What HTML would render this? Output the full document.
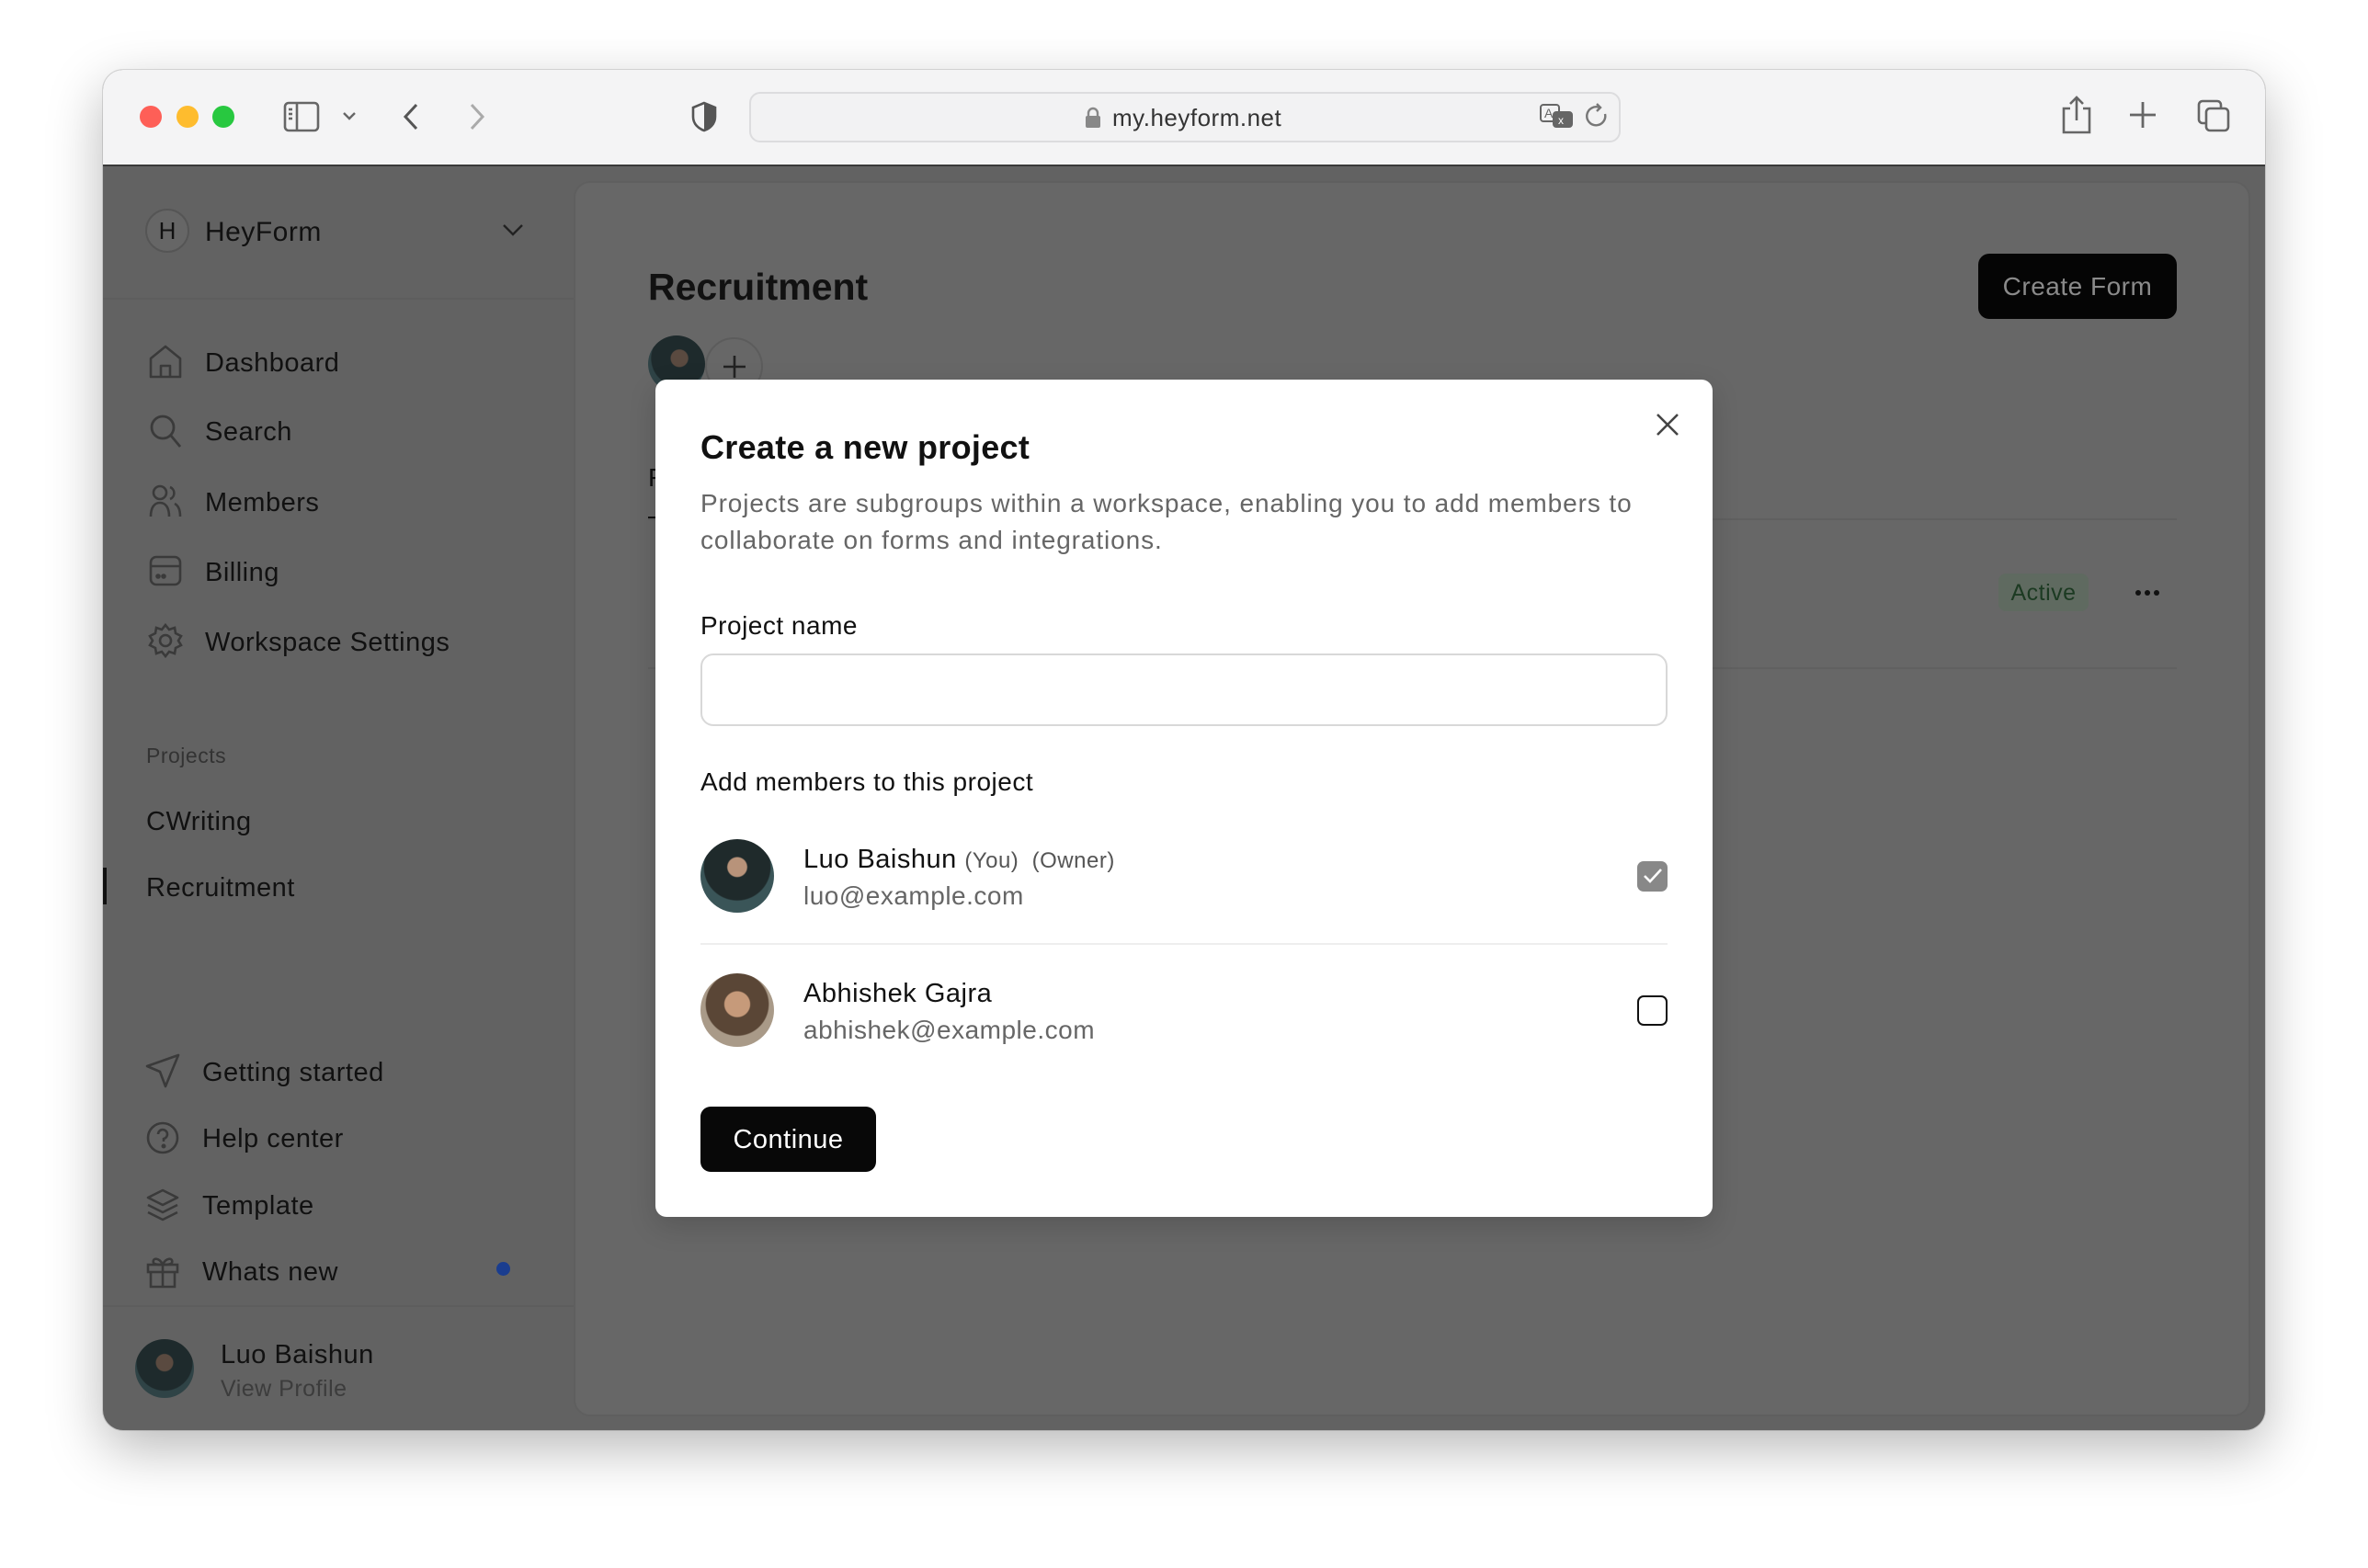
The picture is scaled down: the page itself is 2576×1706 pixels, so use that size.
<!DOCTYPE html>
<html><head><meta charset="utf-8"><style>
*{margin:0;padding:0;box-sizing:border-box}
body{width:2576px;height:1706px;background:#fff;font-family:"Liberation Sans",Arial,sans-serif;position:relative;overflow:hidden}
.a{position:absolute}
.t{position:absolute;white-space:nowrap;line-height:40px;letter-spacing:0.5px;margin-top:2px}
svg{position:absolute;overflow:visible}
</style></head><body>
<div class="a" style="left:112px;top:76px;width:2352px;height:1480px;border-radius:22px;background:#626262;box-shadow:0 20px 60px rgba(0,0,0,.28),0 0 0 1px rgba(0,0,0,.12);overflow:hidden">
  <div class="a" style="left:0;top:0;width:2352px;height:105px;background:#f4f4f5;border-bottom:2px solid #3a3a3a"></div>
</div>
<div class="a" style="left:152px;top:115px;width:24px;height:24px;border-radius:50%;background:#fe5f57"></div>
<div class="a" style="left:192px;top:115px;width:24px;height:24px;border-radius:50%;background:#febc2e"></div>
<div class="a" style="left:231px;top:115px;width:24px;height:24px;border-radius:50%;background:#28c840"></div>
<svg style="left:308px;top:110px" width="40" height="34" fill="none" stroke="#666" stroke-width="2.6"><rect x="2" y="2" width="36" height="30" rx="4"/><line x1="15" y1="2" x2="15" y2="32"/><line x1="6" y1="9" x2="10" y2="9"/><line x1="6" y1="14" x2="10" y2="14"/><line x1="6" y1="19" x2="10" y2="19"/></svg>
<svg style="left:373px;top:121px" width="14" height="10" fill="none" stroke="#666" stroke-width="2.4"><path d="M1 2l6 6 6-6"/></svg>
<svg style="left:438px;top:112px" width="18" height="30" fill="none" stroke="#555" stroke-width="3"><path d="M15 2L3 15l12 13"/></svg>
<svg style="left:510px;top:112px" width="18" height="30" fill="none" stroke="#aaa" stroke-width="3"><path d="M3 2l12 13L3 28"/></svg>
<svg style="left:752px;top:110px" width="28" height="34"><path d="M14 2L2 7v10c0 8 6 13 12 15 6-2 12-7 12-15V7z" fill="none" stroke="#555" stroke-width="2.6"/><path d="M14 2v30c6-2 12-7 12-15V7z" fill="#555"/></svg>
<div class="a" style="left:815px;top:100px;width:948px;height:55px;border-radius:12px;border:2px solid #dcdcde;background:#f2f2f3"></div>
<svg style="left:1180px;top:116px" width="18" height="24"><rect x="1" y="10" width="16" height="13" rx="2" fill="#888"/><path d="M4 10V7a5 5 0 0110 0v3" fill="none" stroke="#888" stroke-width="2.4"/></svg>
<div class="t" style="left:1210px;top:106px;font-size:26px;color:#333">my.heyform.net</div>
<svg style="left:1674px;top:112px" width="40" height="32" fill="none" stroke="#666" stroke-width="2"><rect x="2" y="2" width="20" height="18" rx="3"/><text x="6" y="16" font-size="14" fill="#666" stroke="none" font-family="Liberation Sans">A</text><rect x="16" y="10" width="20" height="16" rx="3" fill="#666"/><text x="21" y="23" font-size="12" fill="#fff" stroke="none" font-family="Liberation Sans">x</text></svg>
<svg style="left:1724px;top:112px" width="28" height="30" fill="none" stroke="#777" stroke-width="2.4"><path d="M22 12a10 10 0 11-6-7"/><path d="M13 1l4 4-4 4"/></svg>
<svg style="left:2242px;top:104px" width="34" height="42" fill="none" stroke="#666" stroke-width="2.6"><path d="M10 14H3v26h28V14h-7"/><path d="M17 27V2M10 9l7-7 7 7"/></svg>
<svg style="left:2316px;top:110px" width="30" height="30" stroke="#666" stroke-width="2.8"><path d="M15 1v28M1 15h28"/></svg>
<svg style="left:2390px;top:108px" width="36" height="36" fill="none" stroke="#666" stroke-width="2.6"><rect x="2" y="2" width="24" height="24" rx="4"/><rect x="10" y="10" width="24" height="24" rx="4" fill="#f4f4f5"/></svg>

<div class="a" style="left:112px;top:324px;width:512px;height:2px;background:#5d5d5d"></div>
<div class="a" style="left:158px;top:227px;width:48px;height:48px;border-radius:50%;border:2px solid #555;background:#666;text-align:center;line-height:44px;font-size:26px;color:#111">H</div>
<div class="t" style="left:223px;top:231px;font-size:30px;color:#111">HeyForm</div>
<svg style="left:547px;top:244px" width="22" height="13" fill="none" stroke="#222" stroke-width="2.4"><path d="M1 1l10 10L21 1"/></svg>
<svg style="left:162px;top:374px" width="36" height="38" fill="none" stroke="#3a3a3a" stroke-width="2.6" stroke-linejoin="round"><path d="M2 16L18 3l16 13v20H2z"/><path d="M13 36V24h10v12"/></svg>
<svg style="left:162px;top:450px" width="36" height="38" fill="none" stroke="#3a3a3a" stroke-width="2.8"><circle cx="15" cy="15" r="12"/><path d="M24 24l10 12"/></svg>
<svg style="left:162px;top:526px" width="36" height="38" fill="none" stroke="#3a3a3a" stroke-width="2.6"><circle cx="12" cy="10" r="7"/><path d="M2 36c0-10 4-15 10-15s10 5 10 15"/><path d="M23 4a7 7 0 010 13M28 22c4 2 6 7 6 14"/></svg>
<svg style="left:162px;top:604px" width="36" height="34" fill="none" stroke="#3a3a3a" stroke-width="2.6"><rect x="2" y="2" width="32" height="30" rx="6"/><path d="M2 12h32"/><circle cx="10" cy="23" r="1.5" fill="#3a3a3a"/><circle cx="16" cy="23" r="1.5" fill="#3a3a3a"/></svg>
<svg style="left:162px;top:678px" width="36" height="38" fill="none" stroke="#3a3a3a" stroke-width="2.6"><circle cx="18" cy="19" r="6"/><path d="M18 2l4 5 6-2 1 6 6 3-3 5 3 5-6 3-1 6-6-2-4 5-4-5-6 2-1-6-6-3 3-5-3-5 6-3 1-6 6 2z"/></svg>
<div class="t" style="left:223px;top:373px;font-size:29px;color:#111">Dashboard</div>
<div class="t" style="left:223px;top:448px;font-size:29px;color:#111">Search</div>
<div class="t" style="left:223px;top:525px;font-size:29px;color:#111">Members</div>
<div class="t" style="left:223px;top:601px;font-size:29px;color:#111">Billing</div>
<div class="t" style="left:223px;top:677px;font-size:29px;color:#111">Workspace Settings</div>
<div class="t" style="left:159px;top:800px;font-size:23px;color:#333">Projects</div>
<div class="t" style="left:159px;top:872px;font-size:29px;color:#111">CWriting</div>
<div class="t" style="left:159px;top:944px;font-size:29px;color:#111">Recruitment</div>
<div class="a" style="left:112px;top:944px;width:4px;height:40px;background:#111"></div>

<svg style="left:158px;top:1146px" width="38" height="38" fill="none" stroke="#3a3a3a" stroke-width="2.6" stroke-linejoin="round"><path d="M36 2L2 14l14 6 6 16z"/></svg>
<svg style="left:158px;top:1219px" width="38" height="38" fill="none" stroke="#3a3a3a" stroke-width="2.6"><circle cx="19" cy="19" r="16"/><path d="M14 15a5 5 0 1 1 6 5v3"/><circle cx="20" cy="28" r="1.2" fill="#3a3a3a"/></svg>
<svg style="left:158px;top:1292px" width="38" height="38" fill="none" stroke="#3a3a3a" stroke-width="2.6" stroke-linejoin="round"><path d="M19 3L3 11l16 8 16-8z"/><path d="M3 19l16 8 16-8M3 27l16 8 16-8"/></svg>
<svg style="left:158px;top:1364px" width="38" height="38" fill="none" stroke="#3a3a3a" stroke-width="2.6"><rect x="3" y="12" width="32" height="8"/><path d="M6 20v16h26V20M19 12v24M19 12c-3-8-12-8-10-2 1 2 6 2 10 2zM19 12c3-8 12-8 10-2-1 2-6 2-10 2z"/></svg>
<div class="t" style="left:220px;top:1145px;font-size:29px;color:#111">Getting started</div>
<div class="t" style="left:220px;top:1217px;font-size:29px;color:#111">Help center</div>
<div class="t" style="left:220px;top:1290px;font-size:29px;color:#111">Template</div>
<div class="t" style="left:220px;top:1362px;font-size:29px;color:#111">Whats new</div>
<div class="a" style="left:540px;top:1373px;width:15px;height:15px;border-radius:50%;background:#1a3d8f"></div>
<div class="a" style="left:112px;top:1420px;width:512px;height:2px;background:#5d5d5d"></div>
<div class="a" style="left:147px;top:1457px;width:64px;height:64px;border-radius:50%;background:radial-gradient(circle at 50% 40%,#5a4a40 0 18%,#1e2a2c 20% 60%,#2f4346 62%)"></div>
<div class="t" style="left:240px;top:1452px;font-size:29px;color:#111">Luo Baishun</div>
<div class="t" style="left:240px;top:1489px;font-size:25px;color:#3c3c3c">View Profile</div>

<div class="a" style="left:624px;top:197px;width:1824px;height:1344px;border-radius:18px;background:#676767;border:2px solid #5f5f5f"></div>
<div class="t" style="left:705px;top:290px;font-size:41px;font-weight:bold;color:#111;letter-spacing:0">Recruitment</div>
<div class="a" style="left:2152px;top:276px;width:216px;height:71px;border-radius:12px;background:#050505"></div>
<div class="t" style="left:2152px;top:290px;width:216px;text-align:center;font-size:28px;color:#8a8a8a">Create Form</div>
<div class="a" style="left:767px;top:367px;width:63px;height:63px;border-radius:50%;border:2px solid #5c5c5c;background:#676767"></div>
<svg style="left:786px;top:386px" width="26" height="26" stroke="#222" stroke-width="2.6"><path d="M13 1v24M1 13h24"/></svg>
<div class="a" style="left:705px;top:365px;width:62px;height:62px;border-radius:50%;background:radial-gradient(circle at 55% 40%,#5a4a40 0 18%,#1e2a2c 20% 60%,#2f4346 62%)"></div>
<div class="t" style="left:705px;top:498px;font-size:28px;color:#111">F</div>
<div class="a" style="left:705px;top:562px;width:14px;height:4px;background:#111"></div>
<div class="a" style="left:705px;top:564px;width:1663px;height:2px;background:#606060"></div>
<div class="a" style="left:705px;top:726px;width:1663px;height:2px;background:#606060"></div>
<div class="a" style="left:2174px;top:624px;width:98px;height:41px;border-radius:8px;background:#5f6a60"></div>
<div class="t" style="left:2174px;top:623px;width:98px;text-align:center;font-size:25px;color:#1c3a22">Active</div>
<svg style="left:2322px;top:641px" width="30" height="8" fill="#111"><circle cx="4" cy="4" r="3"/><circle cx="14" cy="4" r="3"/><circle cx="24" cy="4" r="3"/></svg>

<div class="a" style="left:713px;top:413px;width:1150px;height:911px;border-radius:12px;background:#fff;box-shadow:0 10px 30px rgba(0,0,0,.15)"></div>
<svg style="left:1801px;top:449px" width="26" height="26" stroke="#444" stroke-width="2.6"><path d="M2 2l22 22M24 2L2 24"/></svg>
<div class="t" style="left:762px;top:465px;font-size:36px;font-weight:bold;color:#111;letter-spacing:0.3px">Create a new project</div>
<div class="t" style="left:762px;top:526px;font-size:28px;color:#666;line-height:40px;white-space:normal;width:1090px;letter-spacing:0.9px">Projects are subgroups within a workspace, enabling you to add members to collaborate on forms and integrations.</div>
<div class="t" style="left:762px;top:659px;font-size:28px;color:#111">Project name</div>
<div class="a" style="left:762px;top:711px;width:1052px;height:79px;border-radius:14px;border:2px solid #d8d8d8"></div>
<div class="t" style="left:762px;top:829px;font-size:28px;color:#111">Add members to this project</div>
<div class="a" style="left:762px;top:913px;width:80px;height:80px;border-radius:50%;background:radial-gradient(circle at 50% 38%,#b8937a 0 16%,#1f2a2b 18% 56%,#3a5558 58%)"></div>
<div class="t" style="left:874px;top:913px;font-size:29px;color:#111">Luo Baishun <span style="font-size:24px;color:#555">(You)&nbsp; (Owner)</span></div>
<div class="t" style="left:874px;top:953px;font-size:28px;color:#666">luo@example.com</div>
<div class="a" style="left:1781px;top:937px;width:33px;height:33px;border-radius:7px;background:#888"></div>
<svg style="left:1787px;top:944px" width="22" height="18" fill="none" stroke="#fff" stroke-width="2.6"><path d="M2 9l6 6L20 2"/></svg>
<div class="a" style="left:762px;top:1026px;width:1052px;height:2px;background:#eee"></div>
<div class="a" style="left:762px;top:1059px;width:80px;height:80px;border-radius:50%;background:radial-gradient(circle at 50% 42%,#c69a7a 0 22%,#5a4636 24% 55%,#a99a88 57%)"></div>
<div class="t" style="left:874px;top:1059px;font-size:29px;color:#111">Abhishek Gajra</div>
<div class="t" style="left:874px;top:1099px;font-size:28px;color:#666">abhishek@example.com</div>
<div class="a" style="left:1781px;top:1083px;width:33px;height:33px;border-radius:7px;border:2.5px solid #111"></div>
<div class="a" style="left:762px;top:1204px;width:191px;height:71px;border-radius:11px;background:#080808"></div>
<div class="t" style="left:762px;top:1218px;width:191px;text-align:center;font-size:29px;color:#fff">Continue</div>
</body></html>
